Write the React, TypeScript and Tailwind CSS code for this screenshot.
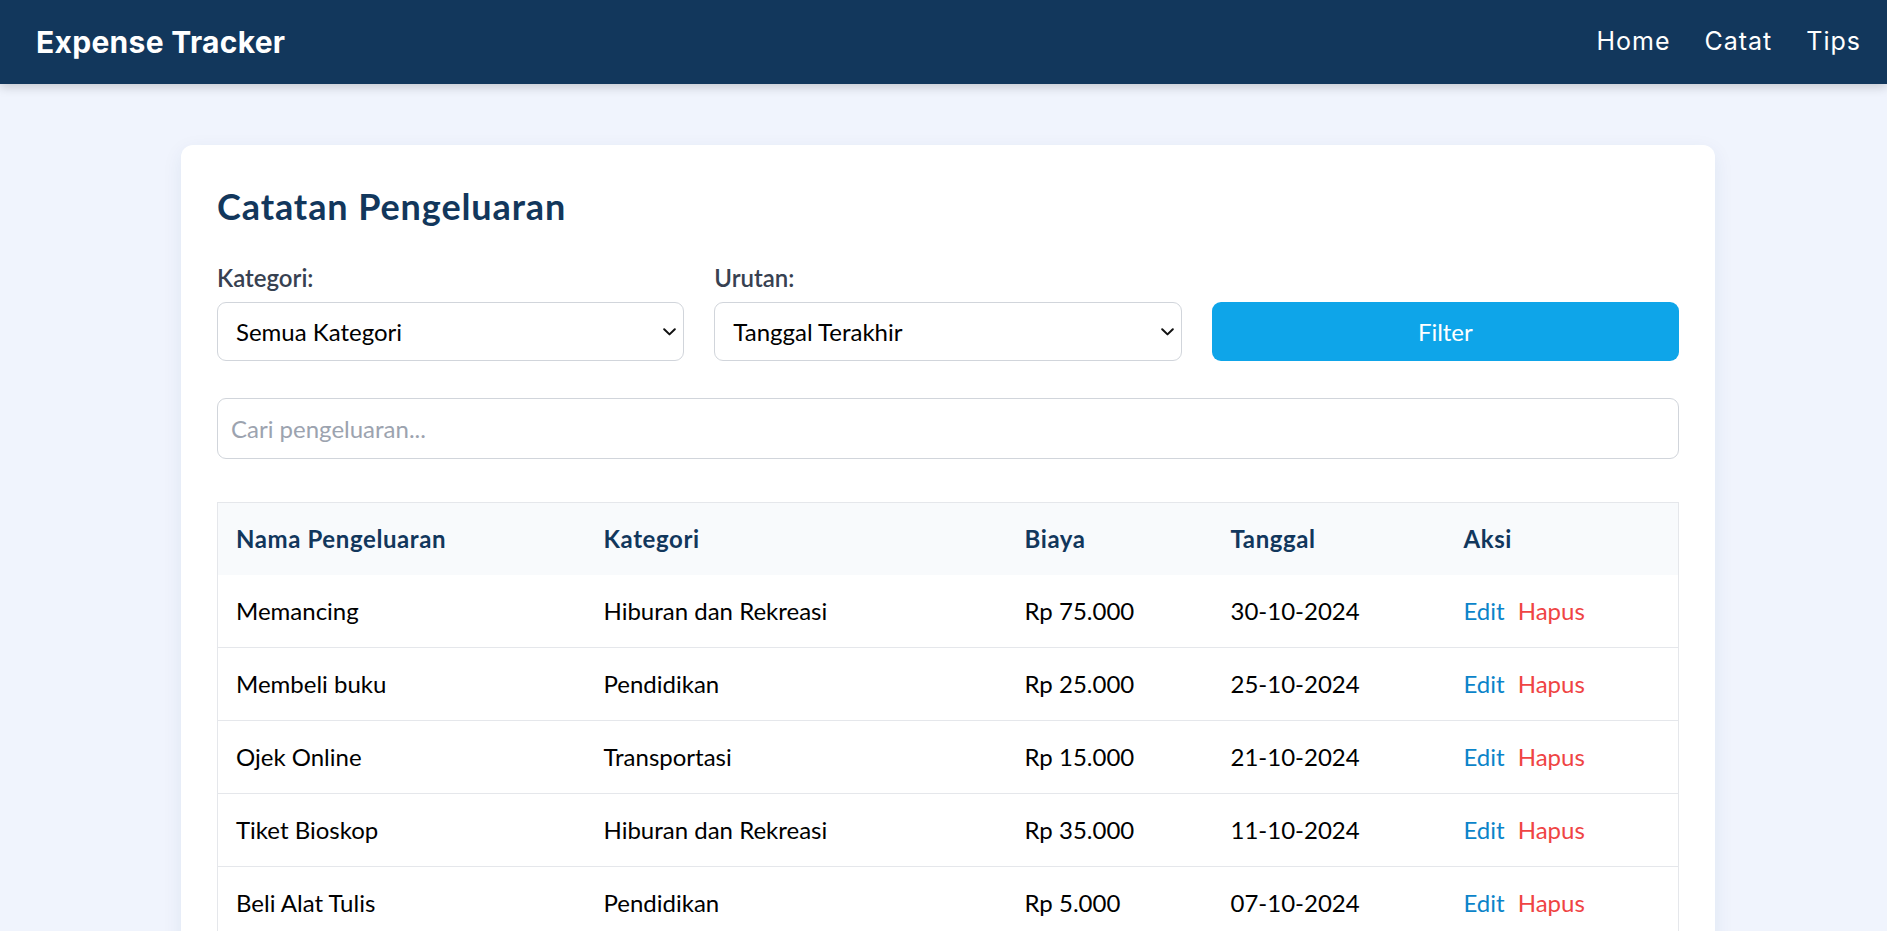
import React from "react";

const rows = [
  { name: "Memancing", cat: "Hiburan dan Rekreasi", cost: "Rp 75.000", date: "30-10-2024" },
  { name: "Membeli buku", cat: "Pendidikan", cost: "Rp 25.000", date: "25-10-2024" },
  { name: "Ojek Online", cat: "Transportasi", cost: "Rp 15.000", date: "21-10-2024" },
  { name: "Tiket Bioskop", cat: "Hiburan dan Rekreasi", cost: "Rp 35.000", date: "11-10-2024" },
  { name: "Beli Alat Tulis", cat: "Pendidikan", cost: "Rp 5.000", date: "07-10-2024" },
];

function Chevron() {
  return (
    <svg width="13" height="8" viewBox="0 0 13 8" className="pointer-events-none absolute right-[7px] top-1/2 -translate-y-1/2">
      <path d="M1.2 1.2 L6.5 6.4 L11.8 1.2" fill="none" stroke="#111" strokeWidth="2" strokeLinecap="round" strokeLinejoin="round" />
    </svg>
  );
}

function SelectBox({ value }: { value: string }) {
  return (
    <div className="relative h-[59px] rounded-[9px] border border-[#d1d5db] bg-white flex items-center pl-[18px]">
      <span className="text-[24px] text-black">{value}</span>
      <Chevron />
    </div>
  );
}

export default function App() {
  return (
    <div className="min-h-screen bg-[#f0f4fd] font-['Lato','Open_Sans',sans-serif]">
      <nav className="relative z-10 h-[84px] bg-[#12375c] flex items-center justify-between pl-[36px] pr-[26px] shadow-[0_3px_10px_rgba(0,0,0,0.18)] font-['Inter',sans-serif]">
        <div className="text-white text-[30px] font-bold tracking-[0.3px]">Expense Tracker</div>
        <div className="flex items-center gap-[34px] text-white text-[25px] tracking-[1px]">
          <span>Home</span>
          <span>Catat</span>
          <span>Tips</span>
        </div>
      </nav>
      <main className="pt-[61px] pl-[181px]">
        <div className="w-[1534px] rounded-[12px] bg-white p-[36px] shadow-[0_6px_20px_rgba(30,60,120,0.08)]">
          <h2 className="mt-[1px] text-[36px] leading-[48px] font-bold tracking-[0.9px] text-[#12375c]">Catatan Pengeluaran</h2>
          <div className="mt-[32px] grid grid-cols-3 gap-[30px] items-end">
            <div>
              <label className="block text-[24px] leading-[32px] font-semibold text-[#374151] mb-[8px]">Kategori:</label>
              <SelectBox value="Semua Kategori" />
            </div>
            <div>
              <label className="block text-[24px] leading-[32px] font-semibold text-[#374151] mb-[8px]">Urutan:</label>
              <SelectBox value="Tanggal Terakhir" />
            </div>
            <button className="h-[59px] rounded-[9px] bg-[#0ea5e9] text-white text-[24px]">Filter</button>
          </div>
          <div className="mt-[37px] h-[61px] rounded-[9px] border border-[#d1d5db] flex items-center pl-[13px]">
            <input
              className="w-full outline-none text-[24px] placeholder:text-[#9ca3af] bg-transparent"
              placeholder="Cari pengeluaran..."
            />
          </div>
          <table className="mt-[43px] w-full table-fixed border-collapse border border-[#e5e7eb]">
            <colgroup>
              <col className="w-[368px]" />
              <col className="w-[421px]" />
              <col className="w-[206px]" />
              <col className="w-[233px]" />
              <col className="w-[233px]" />
            </colgroup>
            <thead>
              <tr className="h-[72px] bg-[#f8fafc]">
                {["Nama Pengeluaran", "Kategori", "Biaya", "Tanggal", "Aksi"].map((h) => (
                  <th key={h} className="px-[18px] text-left text-[24px] font-bold tracking-[0.6px] text-[#12375c]">
                    {h}
                  </th>
                ))}
              </tr>
            </thead>
            <tbody>
              {rows.map((r) => (
                <tr key={r.name} className="h-[73px] border-b border-[#e5e7eb]">
                  <td className="px-[18px] text-[24px] text-black">{r.name}</td>
                  <td className="px-[18px] text-[24px] text-black">{r.cat}</td>
                  <td className="px-[18px] text-[24px] text-black">{r.cost}</td>
                  <td className="px-[18px] text-[24px] text-black">{r.date}</td>
                  <td className="px-[18px] text-[24px]">
                    <span className="text-[#0b84c9] mr-[13px]">Edit</span>
                    <span className="text-[#ef4444]">Hapus</span>
                  </td>
                </tr>
              ))}
            </tbody>
          </table>
        </div>
      </main>
    </div>
  );
}
